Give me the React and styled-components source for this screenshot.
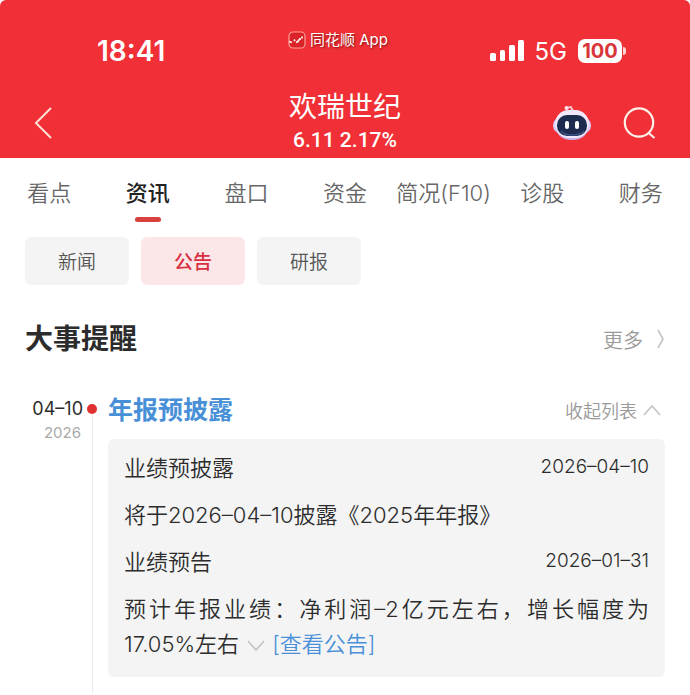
import React, { useState } from "react";
import styled, { createGlobalStyle } from "styled-components";

const tabs = ["看点", "资讯", "盘口", "资金", "简况(F10)", "诊股", "财务"];
const filters = ["新闻", "公告", "研报"];

function App() {
  const [tab, setTab] = useState("资讯");
  const [filter, setFilter] = useState("公告");

  return (
    <Page>
      <GlobalStyle />
      <Header>
        <StatusBar>
          <Time>18:41</Time>
          <Brand>
            <BrandIcon />
            同花顺 App
          </Brand>
          <Signals>
            <SignalIcon />
            <Network>5G</Network>
            <Battery>100</Battery>
          </Signals>
        </StatusBar>
        <NavBar>
          <IconButton aria-label="返回">
            <BackIcon />
          </IconButton>
          <Stock>
            <StockName>欢瑞世纪</StockName>
            <StockPrice>6.11 2.17%</StockPrice>
          </Stock>
          <Actions>
            <IconButton aria-label="智能助手">
              <RobotIcon />
            </IconButton>
            <IconButton aria-label="搜索">
              <SearchIcon />
            </IconButton>
          </Actions>
        </NavBar>
      </Header>

      <Tabs>
        {tabs.map((name) => (
          <Tab key={name} $active={name === tab} onClick={() => setTab(name)}>
            {name}
          </Tab>
        ))}
      </Tabs>

      <Filters>
        {filters.map((name) => (
          <Filter key={name} $active={name === filter} onClick={() => setFilter(name)}>
            {name}
          </Filter>
        ))}
      </Filters>

      <SectionHead>
        <SectionTitle>大事提醒</SectionTitle>
        <More href="#more">
          更多
          <Chevron width="8" height="20" d="M1 1 L6 10 L1 19" />
        </More>
      </SectionHead>

      <Event>
        <EventDate>
          <Day>04–10</Day>
          <Year>2026</Year>
        </EventDate>
        <Rail>
          <Dot />
          <Line />
        </Rail>
        <EventBody>
          <EventHead>
            <EventTitle>年报预披露</EventTitle>
            <Collapse>
              收起列表
              <Chevron width="18" height="12" d="M1 11 L9 2 L17 11" />
            </Collapse>
          </EventHead>
          <Card>
            <Row>
              <span>业绩预披露</span>
              <RowDate>2026–04–10</RowDate>
            </Row>
            <Text>将于2026–04–10披露《2025年年报》</Text>
            <Row>
              <span>业绩预告</span>
              <RowDate>2026–01–31</RowDate>
            </Row>
            <Text>
              预计年报业绩：净利润–2亿元左右，增长幅度为17.05%左右
              <Expand aria-label="展开">
                <Chevron width="18" height="12" d="M1 1 L9 10 L17 1" />
              </Expand>
              <Notice href="#notice">[查看公告]</Notice>
            </Text>
          </Card>
        </EventBody>
      </Event>
    </Page>
  );
}

export default App;

function Chevron({ width, height, d }) {
  return (
    <svg width={width} height={height} fill="none" stroke="#c4c4c4" strokeWidth="1.6">
      <path d={d} />
    </svg>
  );
}

function BrandIcon() {
  return (
    <svg width="18" height="18" viewBox="0 0 18 18" fill="none">
      <rect x="1" y="1" width="16" height="16" rx="4" fill="#d92329" stroke="#ff9d92" strokeWidth="1.2" />
      <path
        d="M1 10.5 L4 11.5 M6 8.5 L7 10 M8 11.5 L10 10.5 L11 8.5 M12 9 V7 M14 7.5 V5.5"
        stroke="#fff0ea"
        strokeWidth="1.8"
      />
    </svg>
  );
}

function SignalIcon() {
  return (
    <svg width="34" height="22" fill="#fff">
      <rect x="0" y="13" width="6" height="8" rx="1.5" />
      <rect x="10" y="10" width="5" height="11" rx="1.5" />
      <rect x="19" y="5" width="6" height="16" rx="1.5" />
      <rect x="28" y="0" width="6" height="21" rx="1.5" />
    </svg>
  );
}

function BackIcon() {
  return (
    <svg width="18" height="32" fill="none" stroke="#ffe0d2" strokeWidth="2">
      <path d="M17 1 L2 16 L17 31" />
    </svg>
  );
}

function SearchIcon() {
  return (
    <svg width="33" height="32" fill="none" stroke="#fff0ea" strokeWidth="2.2">
      <circle cx="16" cy="15.5" r="14.2" />
      <path d="M25 25.5 L31.5 31" />
    </svg>
  );
}

function RobotIcon() {
  return (
    <svg width="38" height="36" viewBox="0 0 38 36">
      <path d="M13 3 L18 2 L20 6" fill="none" stroke="#f8c9d4" strokeWidth="1.8" />
      <circle cx="13.5" cy="3" r="2" fill="#fde4e8" />
      <rect x="0" y="13" width="38" height="15" rx="7" fill="#dcc9f2" />
      <rect x="2" y="5" width="34" height="30" rx="15" fill="#c9b4ea" />
      <rect x="2" y="5" width="34" height="28" rx="14" fill="#f1e9fb" />
      <rect x="4" y="10" width="30" height="21" rx="10" fill="#1d2b4f" />
      <path d="M8 26 Q11 30 19 30 Q28 30 31 26" fill="none" stroke="#3a5486" strokeWidth="1.4" />
      <rect x="12" y="16" width="4" height="8" rx="2" fill="#fff" />
      <rect x="22" y="16" width="4" height="8" rx="2" fill="#fff" />
    </svg>
  );
}

const GlobalStyle = createGlobalStyle`
  * {
    box-sizing: border-box;
  }
  body {
    margin: 0;
    background: #fff;
    font-family: Inter, "Noto Sans CJK SC", sans-serif;
  }
  button {
    padding: 0;
    border: 0;
    background: none;
    font: inherit;
    cursor: pointer;
  }
  a {
    text-decoration: none;
  }
  svg {
    display: block;
    flex-shrink: 0;
  }
`;

const Page = styled.main`
  overflow: hidden;
  color: #2c2c2c;
`;

const Header = styled.header`
  padding-bottom: 2px;
  background: #f03036;
  border-radius: 6px 6px 0 0;
  color: #fff;
`;

const StatusBar = styled.div`
  display: grid;
  grid-template-columns: 1fr auto 1fr;
  align-items: center;
  padding: 28px 64px 16px 50px;
`;

const Time = styled.div`
  padding-left: 47px;
  font-size: 28px;
  line-height: 46px;
  font-weight: 600;
`;

const Brand = styled.div`
  display: flex;
  align-self: start;
  align-items: center;
  gap: 4px;
  font-size: 15px;
  line-height: 24px;
  text-shadow: 1px 1px 2px rgba(90, 0, 0, 0.7);
`;

const Signals = styled.div`
  display: flex;
  justify-content: flex-end;
  align-items: center;
`;

const Network = styled.span`
  margin: 0 11px;
  font-size: 24px;
`;

const Battery = styled.span`
  position: relative;
  width: 44px;
  margin-right: 4px;
  border-radius: 7px;
  background: #fff;
  color: #d8353b;
  font-size: 20px;
  line-height: 24px;
  font-weight: 700;
  text-align: center;

  &::after {
    content: "";
    position: absolute;
    top: 8px;
    right: -4px;
    width: 3px;
    height: 8px;
    border-radius: 0 3px 3px 0;
    background: #fbd5d3;
  }
`;

const NavBar = styled.div`
  display: grid;
  grid-template-columns: 1fr auto 1fr;
  align-items: center;
  padding: 0 34px;
`;

const IconButton = styled.button`
  justify-self: start;
`;

const Stock = styled.div`
  text-align: center;
`;

const StockName = styled.h1`
  margin: 0;
  font-size: 28px;
  line-height: 34px;
  font-weight: 400;
`;

const StockPrice = styled.div`
  font-family: Roboto, sans-serif;
  font-size: 21px;
  line-height: 32px;
  font-weight: 500;
`;

const Actions = styled.div`
  display: flex;
  justify-content: flex-end;
  align-items: center;
  gap: 32px;
`;

const Tabs = styled.nav`
  display: flex;
`;

const Tab = styled.button`
  display: flex;
  flex: 1 1 0;
  min-width: 0;
  flex-direction: column;
  align-items: center;
  padding-top: 18px;
  color: ${(props) => (props.$active ? "#222" : "#666")};
  font-size: 22px;
  line-height: 34px;
  font-weight: ${(props) => (props.$active ? 500 : 350)};
  white-space: nowrap;

  &::after {
    content: "";
    width: 26px;
    height: 5px;
    margin-top: 7px;
    border-radius: 3px;
    background: ${(props) => (props.$active ? "#d9413f" : "transparent")};
  }
`;

const Filters = styled.div`
  display: flex;
  gap: 12px;
  padding: 15px 25px 0;
`;

const Filter = styled.button`
  width: 104px;
  padding-top: 4px;
  border-radius: 6px;
  background: ${(props) => (props.$active ? "#fce7e8" : "#f4f4f4")};
  color: ${(props) => (props.$active ? "#d92f42" : "#555")};
  font-size: 19px;
  line-height: 44px;
  font-weight: ${(props) => (props.$active ? 500 : 350)};
`;

const SectionHead = styled.div`
  display: flex;
  justify-content: space-between;
  align-items: center;
  padding: 32px 25px;
`;

const SectionTitle = styled.h2`
  margin: 0;
  font-size: 28px;
  line-height: 44px;
  font-weight: 600;
`;

const More = styled.a`
  display: flex;
  align-items: center;
  gap: 14px;
  color: #999;
  font-size: 20px;
  font-weight: 350;
`;

const Event = styled.article`
  display: grid;
  grid-template-columns: 83px 18px 1fr;
  padding-right: 25px;
`;

const EventDate = styled.div`
  text-align: right;
`;

const Day = styled.div`
  font-size: 18px;
  line-height: 32px;
`;

const Year = styled.div`
  padding-right: 2px;
  color: #aaa;
  font-size: 15px;
  line-height: 16px;
`;

const Rail = styled.div`
  display: flex;
  flex-direction: column;
  align-items: center;
  padding-top: 11px;
`;

const Dot = styled.span`
  width: 10px;
  height: 10px;
  border-radius: 50%;
  background: #e0302f;
`;

const Line = styled.span`
  flex: 1;
  width: 1px;
  background: #ececec;
`;

const EventBody = styled.div`
  padding: 0 0 16px 7px;
`;

const EventHead = styled.div`
  display: flex;
  justify-content: space-between;
  align-items: center;
  padding-bottom: 12px;
`;

const EventTitle = styled.h3`
  margin: 0;
  color: #4790d8;
  font-size: 25px;
  line-height: 34px;
  font-weight: 600;
`;

const Collapse = styled.button`
  display: flex;
  align-items: center;
  gap: 6px;
  padding-right: 4px;
  color: #999;
  font-size: 18px;
  font-weight: 350;
`;

const Card = styled.div`
  display: flex;
  flex-direction: column;
  gap: 12px;
  padding: 12px 16px 15px;
  border-radius: 6px;
  background: #f4f4f4;
  font-size: 22px;
  line-height: 35px;
  font-weight: 350;
`;

const Row = styled.div`
  display: flex;
  justify-content: space-between;
`;

const RowDate = styled.time`
  font-size: 19px;
  line-height: 32px;
`;

const Text = styled.p`
  margin: 0;
  text-align: justify;
`;

const Expand = styled.button`
  margin: 0 7px 0 8px;
  vertical-align: middle;
`;

const Notice = styled.a`
  color: #4a90d9;
`;
